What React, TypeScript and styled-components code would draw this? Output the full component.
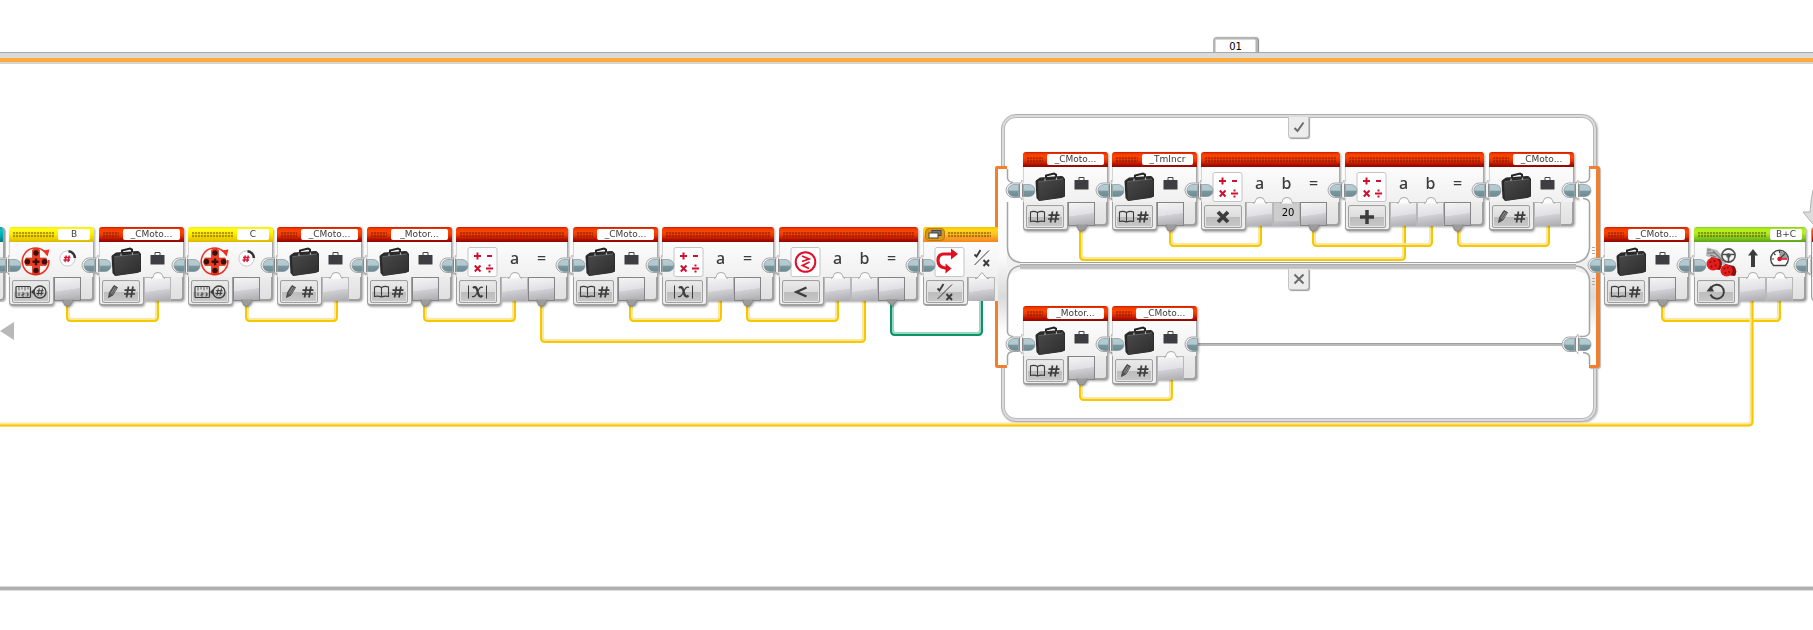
import React from "react";
import styled, { createGlobalStyle } from "styled-components";

const GlobalStyle = createGlobalStyle`
  *, *::before, *::after { box-sizing: border-box; }
  body { margin: 0; background: #fff; font-family: "DejaVu Sans", sans-serif; }
  button, input { font: inherit; color: inherit; margin: 0; padding: 0; border: 0; background: none; }
`;

type Tone = "red" | "yellow" | "green" | "teal" | "orange";
type IconName = "case" | "motor" | "math" | "compare" | "switch" | "steering";
type ModeName =
  | "read" | "write" | "measure" | "abs" | "less" | "times" | "plus" | "logic" | "rotate" | "none";
type PortLabel = "a" | "b" | "=" | "case" | "rotation" | "logic" | "up" | "power";
type PortKind = "in" | "out" | "logicIn" | "logicOut";

interface PortSpec {
  label: PortLabel;
  kind: PortKind;
  value?: string;
}

interface BlockSpec {
  x: number;
  y: number;
  tone: Tone;
  icon: IconName;
  mode: ModeName;
  name?: string;
  nameWidth?: number;
  ports: PortSpec[];
  last?: boolean;
}

const tones: Record<Tone, string> = {
  red: "linear-gradient(#c81c00 0, #f43c00 2px, #ff4600 5px, #e83000 9px, #a80c00 13px, #8c0800 15px)",
  yellow: "linear-gradient(#f4ec00 0, #fffb20 2px, #fff400 6px, #f4dc00 10px, #dcb800 15px)",
  green: "linear-gradient(#8cc820 0, #b0f020 2px, #b4f01c 6px, #8cd41c 10px, #5ca01c 15px)",
  teal: "linear-gradient(#00989c 0, #10c0c4 3px, #00a8ac 9px, #007478 15px)",
  orange: "linear-gradient(#f8c000 0, #ffd818 3px, #ffc41c 7px, #fca024 11px, #f48420 15px)",
};

const Page = styled.main`
  position: relative;
  display: flex;
  flex-direction: column;
  min-height: 100vh;
  padding: 37px 0 40px;
  overflow: hidden;
  background: #fff;
`;

const LoopHeader = styled.header`
  display: flex;
  flex-direction: column;
  padding-left: 1213px;
`;

const LoopName = styled.input`
  width: 45px;
  height: 16px;
  border: 2px solid #b4b4b4;
  border-bottom-width: 0;
  border-radius: 4px 4px 0 0;
  box-shadow: inset 0 0 0 1px #d8d8d8, 1px 0 1px #888;
  background: #fff;
  color: #000;
  font-size: 10px;
  line-height: 14px;
  text-align: center;
`;

const LoopBody = styled.section`
  flex: 1;
  min-height: 524px;
  border-top: 5px solid #dadada;
  border-bottom: 3px solid #b0b0b0;
  box-shadow: inset 0 4px 0 #ffab3a, inset 0 6px 0 #d4d4d4, inset 0 -1px 0 #d8d8d8, 0 -1px 0 #a8a8a8, 0 1px 0 #e0e0e0;
`;

const Canvas = styled.div`
  position: absolute;
  inset: 0;
`;

const WireLayer = styled.svg`
  position: absolute;
  inset: 0;
  width: 100%;
  height: 100%;
  fill: none;
`;

const BlockFrame = styled.article<{ $x: number; $y: number; $width: number; $flat?: boolean }>`
  position: absolute;
  left: ${(p) => p.$x}px;
  top: ${(p) => p.$y}px;
  width: ${(p) => p.$width}px;
  display: flex;
  flex-direction: column;
  filter: ${(p) => (p.$flat ? "none" : "drop-shadow(1px 1px 1px rgba(0, 0, 0, 0.35))")};
`;

const BlockHeader = styled.header<{ $tone: Tone }>`
  display: flex;
  align-items: center;
  gap: 4px;
  height: 15px;
  padding: 0 4px;
  border-radius: 3px 3px 0 0;
  background: ${(p) => tones[p.$tone]};
`;

const Grip = styled.span`
  flex: 1;
  height: 6px;
  background-image: radial-gradient(circle at 1px 1px, rgba(70, 20, 0, 0.4) 0, rgba(70, 20, 0, 0.4) 40%, transparent 60%);
  background-size: 3px 3px;
`;

const NameTag = styled.span<{ $width: number }>`
  width: ${(p) => p.$width}px;
  height: 11px;
  border-radius: 2px;
  background: #fff;
  color: #3c3c3c;
  font-size: 9px;
  line-height: 11px;
  text-align: center;
  white-space: nowrap;
`;

const IconRow = styled.div`
  display: flex;
  height: 35px;
  padding-top: 5px;
  border-left: 1px solid #d4d4d4;
  border-right: 1px solid #a8a8a8;
  background: linear-gradient(#fcfcfc, #f0f0f0);
`;

const MainIcon = styled.span`
  display: flex;
  width: 44px;
  padding-left: 10px;
`;

const PortName = styled.span`
  display: flex;
  justify-content: center;
  align-items: center;
  width: 27px;
  height: 22px;
  color: #3c3c3c;
  font-family: "Noto Sans", sans-serif;
  font-size: 16px;
  font-weight: 500;
  line-height: 22px;
`;

const BottomRow = styled.div`
  display: flex;
  align-items: flex-start;
`;

const ModePanel = styled.div`
  width: 45px;
  height: 29px;
  padding: 3px 3px 3px 2px;
  border: 1px solid #a0a0a0;
  border-top: 0;
  border-bottom: 2px solid #a0a0a0;
  border-radius: 0 0 4px 4px;
  background: #ededed;
`;

const ModeButton = styled.button`
  display: flex;
  align-items: center;
  justify-content: center;
  width: 38px;
  height: 23px;
  border: 1px solid #a0a0a0;
  border-radius: 2px;
  background: linear-gradient(#ececec 0, #dcdcdc 50%, #bcbcbc 51%, #c8c8c8 100%);
  box-shadow: inset 0 0 0 1px #e4e4e4;
`;

const PortSlot = styled.div<{ $out: boolean }>`
  position: relative;
  width: 27px;
  height: 24px;
  border: solid ${(p) => (p.$out ? "#848484" : "#b8b8b8")};
  border-width: ${(p) => (p.$out ? "1px" : "1px 1px 0")};
  background: linear-gradient(172deg, #f4f4f4 0, #e0e0e4 52%, #d0d0d4 54%, #acacb0 100%);
`;

const Nub = styled.svg<{ $out: boolean }>`
  position: absolute;
  left: 6px;
  top: ${(p) => (p.$out ? 21 : -7)}px;
  width: 14px;
  height: 8px;
`;

const ValueInput = styled.input`
  display: block;
  width: 25px;
  height: 18px;
  background: #cdcdcd;
  color: #000;
  font-size: 10px;
  padding-left: 3px;
  text-align: center;
`;

const Tail = styled.div`
  flex: 1;
  height: 24px;
  border-right: 2px solid #a0a0a0;
  border-bottom: 2px solid #a0a0a0;
  border-radius: 0 0 4px 0;
  background: linear-gradient(#ececec, #e0e0e0);
`;

const OpenTail = styled.div`
  flex: 1;
  height: 24px;
  background: #ececec;
`;

const PlugDrawing = styled.svg<{ $x: number; $y: number }>`
  position: absolute;
  left: ${(p) => p.$x}px;
  top: ${(p) => p.$y}px;
  width: 20px;
  height: 22px;
  overflow: visible;
`;

const SwitchFrame = styled.section`
  position: absolute;
  left: 1001px;
  top: 114px;
  width: 596px;
  height: 308px;
  border: 1px solid #b0b0b0;
  border-radius: 15px;
  box-shadow: inset 0 0 0 2px #dcdcdc, inset 0 0 0 3px #b8b8b8, 1px 1px 2px #bbb;
  background: #fff;
`;

const CaseDivider = styled.div`
  margin: 147px 16px 0;
  height: 8px;
  background: linear-gradient(#a0a0a0 1px, #f4f4f4 1px, #f4f4f4 2px, #a4a4a4 2px, #c8c8c8 4px, #b8b8b8 6px, #dedede 7px, #f0f0f0 8px);
`;

const CaseTab = styled.button<{ $y: number }>`
  position: absolute;
  left: 1288px;
  top: ${(p) => p.$y}px;
  display: flex;
  align-items: center;
  justify-content: center;
  width: 21px;
  height: 21px;
  border: 1px solid #c4c4c4;
  border-top: 0;
  border-radius: 0 0 3px 3px;
  background: #ececec;
  box-shadow: 1px 1px 1px #999;
`;

const SwitchRail = styled.div<{ $x: number; $side: "left" | "right"; $width: number }>`
  position: absolute;
  left: ${(p) => p.$x}px;
  top: 166px;
  width: ${(p) => p.$width}px;
  height: 202px;
  border: solid #f08030;
  border-width: ${(p) => (p.$side === "left" ? "3px 0 3px 3px" : "3px 4px 3px 0")};
  border-radius: ${(p) => (p.$side === "left" ? "3px 0 0 3px" : "0 3px 3px 0")};
  background: linear-gradient(#fff 0, #fafafa 45%, #dadada 65%, #fdfdfd 82%, #fff 100%);
  box-shadow: ${(p) => (p.$side === "left" ? "none" : "1px 1px 1px #bbb")};
`;

const SwitchHeader = styled.header`
  display: flex;
  align-items: center;
  gap: 3px;
  height: 15px;
  padding: 0 7px 0 2px;
  border-radius: 3px 0 2px 0;
  background: ${tones.orange};
`;

const ViewToggle = styled.button`
  display: flex;
  align-items: center;
  justify-content: center;
  width: 20px;
  height: 13px;
  border: 1px solid #b87c10;
  border-radius: 4px;
  background: #d89818;
`;

const SwitchIcons = styled(IconRow)`
  border-right: 0;
`;

const ScrollLeft = styled.button`
  position: absolute;
  left: 0;
  top: 321px;
  width: 16px;
  height: 20px;
`;

const TinyPiece = styled.div<{ $x: number }>`
  position: absolute;
  left: ${(p) => p.$x}px;
  top: 227px;
  width: 15px;
  height: 74px;
  border-right: 2px solid #a0a0a0;
  border-left: 1px solid #a0a0a0;
  border-bottom: 2px solid #a0a0a0;
  border-radius: 4px;
  background: linear-gradient(#fcfcfc, #e4e4e4);
  overflow: hidden;
  box-shadow: 1px 1px 1px #bbb;
`;

const TinyHeader = styled.div<{ $tone: Tone }>`
  height: 15px;
  background: ${(p) => tones[p.$tone]};
`;

const LoopArrow = styled.svg`
  position: absolute;
  left: 1801px;
  top: 190px;
  width: 30px;
  height: 40px;
`;

const SharedDefs = styled.svg`
  position: absolute;
  width: 0;
  height: 0;
`;

function Defs() {
  return (
    <SharedDefs aria-hidden="true">
      <defs>
        <linearGradient id="teal" x1="0" y1="0" x2="0" y2="1">
          <stop offset="0" stopColor="#b4ccd2" />
          <stop offset="0.48" stopColor="#b4c8ce" />
          <stop offset="0.54" stopColor="#7a989f" />
          <stop offset="1" stopColor="#6c8b92" />
        </linearGradient>
        <linearGradient id="leather" x1="0" y1="0" x2="1" y2="1">
          <stop offset="0" stopColor="#4a4a4a" />
          <stop offset="1" stopColor="#2c2c2c" />
        </linearGradient>
      </defs>
    </SharedDefs>
  );
}

function PlugOut({ x, y, closed }: { x: number; y: number; closed?: boolean }) {
  const outline = closed
    ? "M14.500 4H8.500A7.300 7.300 0 0 0 8.500 18.500H14.500"
    : "M18 1C18 3 17 4 15.500 4H8.500A7.300 7.300 0 0 0 8.500 18.500H15.500C17 18.500 18 19.500 18 21";
  return (
    <PlugDrawing $x={x} $y={y} viewBox="0 0 20 22">
      <path d={outline} fill="#f6f6f6" stroke="#a4a4a4" />
      <path d="M14.500 5.500H10A6 6 0 0 0 10 17.500H14.500Z" fill="url(#teal)" stroke="#76898e" strokeWidth="0.600" />
      {!closed && <path d="M15.500 4.500V18" stroke="#8a8a8a" />}
    </PlugDrawing>
  );
}

function PlugIn({ x, y }: { x: number; y: number }) {
  return (
    <PlugDrawing $x={x} $y={y} viewBox="0 0 20 22">
      <path d="M-2 3.500H1V18.500H-2Z" fill="#f4f4f4" />
      <path d="M-0.500 4.500V18" stroke="#8a8a8a" />
      <path d="M0.500 5.500H6A6 6 0 0 1 6 17.500H0.500Z" fill="url(#teal)" stroke="#76898e" strokeWidth="0.600" />
    </PlugDrawing>
  );
}

function CaseIcon() {
  return (
    <svg width="32" height="30" viewBox="0 0 32 30">
      <path d="M12 7V3.500L20 1.500L22 2.500V6" fill="none" stroke="#222" strokeWidth="2" />
      <path d="M1.500 9.500Q1.500 8.500 2.500 8L6 5.500L27 4Q29 3.900 29.500 5L31 7L31 24.500L27 26L5 29L2.500 26Z" fill="#2a2a2a" />
      <path d="M4 10L28 7.500Q30 7.400 30.200 9L30.500 23.500Q30.500 25 29 25.300L7 28.600Q5 28.800 4.900 27Z" fill="url(#leather)" />
      <path d="M4.500 9.600L29 7" stroke="#707070" strokeWidth="0.800" />
      <path d="M11 6.500V9M22.500 5.500V8" stroke="#aaa" strokeWidth="1.200" />
    </svg>
  );
}

function MotorIcon() {
  return (
    <svg width="32" height="30" viewBox="0 0 32 30">
      <path d="M24.500 4.500A13.300 13.300 0 1 0 28.800 13" fill="none" stroke="#f03020" strokeWidth="1.600" />
      <path d="M22.500 3.500L29.500 2.500L27.500 9.500Z" fill="#f03020" />
      <path d="M12.500 3Q16 0.500 19.500 3V11H26Q29 15 26 18.500H19.500V26.500Q16 29 12.500 26.500V18.500H6Q3 15 6 11H12.500Z" fill="#f03c20" stroke="#c81c08" strokeWidth="0.600" />
      <g fill="#38100c">
        <circle cx="16" cy="6" r="2.700" /><circle cx="16" cy="23.500" r="2.700" />
        <circle cx="7.500" cy="14.800" r="2.700" /><circle cx="24.500" cy="14.800" r="2.700" />
        <path d="M14.800 11.500H17.200V13.600H19.500V16H17.200V18.200H14.800V16H12.500V13.600H14.800Z" />
      </g>
    </svg>
  );
}

function Tile({ children }: { children: React.ReactNode }) {
  return (
    <svg width="31" height="30" viewBox="0 0 31 30">
      <rect x="1" y="0.500" width="29" height="29" rx="2" fill="#fff" stroke="#c4c4c4" />
      {children}
    </svg>
  );
}

function BlockIcon({ name }: { name: IconName }) {
  switch (name) {
    case "case":
      return <CaseIcon />;
    case "motor":
      return <MotorIcon />;
    case "math":
      return (
        <Tile>
          <path d="M7 9H14M10.500 5.500V12.500M20 9H25M7.800 18.500L13.500 24.500M13.500 18.500L7.800 24.500M19 21.500H26M22.500 17.500V19.500M22.500 23.500V25.500" stroke="#d01030" strokeWidth="2" />
        </Tile>
      );
    case "compare":
      return (
        <Tile>
          <circle cx="15.500" cy="15" r="9.800" fill="none" stroke="#e01028" strokeWidth="2" />
          <path d="M12 9L19 12L12 14.500M19.500 15L12.500 18.500L19 21.500" fill="none" stroke="#e01028" strokeWidth="1.800" />
        </Tile>
      );
    case "switch":
      return (
        <Tile>
          <path d="M20 7H10Q4 7 4 13.500Q4 20 11 21H13" fill="none" stroke="#e01020" strokeWidth="3.200" />
          <path d="M17 1.500L24 7L17 12.500Z M11.500 16.500L17.500 21.500L11.500 26.500Z" fill="#e01020" />
        </Tile>
      );
    case "steering":
      return (
        <svg width="32" height="32" viewBox="0 0 32 32">
          <path d="M2 0.500L12 3L21 13L20 20L11 12L1 9Z" fill="#b8b8b8" />
          <path d="M2 3H6M2 6H10M8 4L18 14M5 8L11 10" stroke="#777" strokeWidth="1.200" />
          <path d="M6 10L15 12Q19 17 15 23L6 22Z" fill="#901010" />
          <path d="M20 17L29 19Q33 23 30 29L20 28Z" fill="#901010" />
          <ellipse cx="8" cy="17" rx="6.500" ry="6.500" fill="#e41c1c" />
          <ellipse cx="21.500" cy="23.500" rx="6" ry="6" fill="#e41c1c" />
          <g fill="#801010">
            <circle cx="5.500" cy="15" r="1" /><circle cx="9.500" cy="14" r="1" /><circle cx="6.500" cy="19.500" r="1" /><circle cx="10.500" cy="18.500" r="1" />
            <circle cx="19.500" cy="21.500" r="1" /><circle cx="23" cy="20.500" r="1" /><circle cx="20.500" cy="26" r="1" /><circle cx="24" cy="25" r="1" />
          </g>
          <circle cx="23.500" cy="8.500" r="6.600" fill="#f4f4f4" stroke="#505050" strokeWidth="1.600" />
          <path d="M17 7.500H30M23.500 8V15" stroke="#505050" strokeWidth="1.600" />
          <circle cx="23.500" cy="8.500" r="2.200" fill="#505050" />
        </svg>
      );
  }
}

function LogicIcon() {
  return (
    <svg width="18" height="18" viewBox="0 0 18 18" fill="none" stroke="#3c3c3c">
      <path d="M1.500 16L16 1.500" strokeWidth="1" />
      <path d="M1.500 5.500L3.500 7.500L7.500 1" strokeWidth="1.900" />
      <path d="M10.500 11L16 17M16 11L10.500 17" strokeWidth="1.900" />
    </svg>
  );
}

function PortIcon({ label }: { label: PortLabel }) {
  switch (label) {
    case "case":
      return (
        <svg width="16" height="14" viewBox="0 0 16 14">
          <path d="M5 4V1.500H10V4" fill="none" stroke="#444" />
          <rect x="0.500" y="4" width="14" height="9.500" rx="0.500" fill="#3e3e42" />
        </svg>
      );
    case "rotation":
      return (
        <svg width="18" height="18" viewBox="0 0 18 18" fill="none">
          <circle cx="8.500" cy="9.500" r="7.600" fill="#fff" stroke="#c8c8c8" />
          <path d="M9.500 2.200A7.300 7.300 0 0 1 15.900 9" stroke="#333" strokeWidth="2.600" />
          <path d="M7.300 6.500L6 13M10.300 6.500L9 13M5 8.500H11.500M4.500 11H11" stroke="#d81838" strokeWidth="1.400" />
        </svg>
      );
    case "logic":
      return <LogicIcon />;
    case "up":
      return (
        <svg width="12" height="20" viewBox="0 0 12 20">
          <path d="M6 1L11 7.500H8V19H4V7.500H1Z" fill="#3c3c3c" />
        </svg>
      );
    case "power":
      return (
        <svg width="21" height="20" viewBox="0 0 21 20">
          <path d="M4.500 17.500A8.800 8.800 0 1 1 16.500 17.500Z" fill="#fff" stroke="#444" strokeWidth="1.400" />
          <path d="M10.500 11V3A8 8 0 0 1 18.500 11Z" fill="#9c9c9c" />
          <path d="M2.500 11H5M5 5.500L6.500 7M10.500 2.500V5M16 5.500L14.500 7M10.500 11L16 5.500" stroke="#444" strokeWidth="1.200" />
          <path d="M10.500 11H18" stroke="#e01028" strokeWidth="1.500" />
          <circle cx="10.500" cy="11" r="2.200" fill="#e01028" />
        </svg>
      );
    default:
      return <>{label}</>;
  }
}

const hash = "M4.500 0L2.500 11M9 0L7 11M0.500 3.700H11.500M0 7.500H11";

function ModeIcon({ name }: { name: ModeName }) {
  const ink = "#3c3c3c";
  switch (name) {
    case "read":
      return (
        <svg width="32" height="16" viewBox="0 0 32 16" fill="none" stroke={ink}>
          <path d="M8.500 3.500Q5 1.500 1.500 3V12.500Q5 11.500 8.500 13Q12 11.500 15.500 12.500V3Q12 1.500 8.500 3.500V13" strokeWidth="1.100" />
          <path transform="translate(19 2.500)" d={hash} strokeWidth="1.700" />
        </svg>
      );
    case "write":
      return (
        <svg width="32" height="16" viewBox="0 0 32 16" fill="none" stroke={ink}>
          <path d="M3.500 13.500L4.500 8.500L9 1.500L12.500 3.500L8 11Z" fill="#555" strokeWidth="0.800" />
          <path d="M6 9.500L10 3M7.500 10.500L11.500 4" stroke="#bbb" strokeWidth="0.600" />
          <path transform="translate(19 2.500)" d={hash} strokeWidth="1.700" />
        </svg>
      );
    case "measure":
      return (
        <svg width="32" height="16" viewBox="0 0 32 16" fill="none" stroke={ink}>
          <rect x="1" y="2.500" width="14.500" height="11" rx="1" strokeWidth="1.200" />
          <path d="M4 3V6.500M7 3V5.500M10 3V6.500M13 3V5.500M4 8.500V12M7 9H9V10.500H7V12H9M11.500 9H13V12H11.500M12 10.500H13" strokeWidth="0.800" />
          <path d="M19.500 4.500L16 8L19.500 11Z" fill={ink} stroke="none" />
          <circle cx="25" cy="8" r="6" strokeWidth="1.300" />
          <path d="M24.300 4.500L23 11.500M27.500 4.500L26 11.500M21.800 6.700H28.700M21.300 9.500H28.200" strokeWidth="1.100" />
        </svg>
      );
    case "abs":
      return (
        <svg width="22" height="16" viewBox="0 0 22 16" fill="none" stroke={ink}>
          <path d="M1.500 1.500V14.500M19.500 1.500V14.500" strokeWidth="1" />
          <path d="M6 4Q8.500 1.500 10 5.500L11.500 10.500Q13 14 15.500 11.500" strokeWidth="2.200" />
          <path d="M16 3.500Q13.500 2 11.500 6L9.500 10Q7.500 13.500 5 12.500" strokeWidth="1.200" />
        </svg>
      );
    case "less":
      return (
        <svg width="14" height="14" viewBox="0 0 14 14" fill="none" stroke={ink}>
          <path d="M12.500 2.500L2.500 7L12.500 11.500" strokeWidth="2.400" />
        </svg>
      );
    case "times":
      return (
        <svg width="14" height="14" viewBox="0 0 14 14" fill="none" stroke={ink}>
          <path d="M2 2L12 12M12 2L2 12" strokeWidth="3.800" />
        </svg>
      );
    case "plus":
      return (
        <svg width="16" height="16" viewBox="0 0 16 16" fill="none" stroke={ink}>
          <path d="M8 1V15M1 8H15" strokeWidth="3.500" />
        </svg>
      );
    case "logic":
      return <LogicIcon />;
    case "rotate":
      return (
        <svg width="20" height="18" viewBox="0 0 20 18" fill="none" stroke={ink}>
          <path d="M5 5A7 7 0 1 1 4.500 11.500" strokeWidth="1.900" />
          <path d="M0.500 8.500L5 2.500L8 8.500Z" fill={ink} stroke="none" />
        </svg>
      );
    default:
      return null;
  }
}

function Port({ kind, value }: PortSpec) {
  const out = kind === "out" || kind === "logicOut";
  const shapes: Record<PortKind, string> = {
    in: "M0 7.500Q2.500 7 2.500 4.500Q3 1.500 7 1.500Q11 1.500 11.500 4.500Q11.500 7 14 7.500",
    logicIn: "M0 7.500H2L7 1.500L12 7.500H14",
    out: "M2 0.500V3Q3 4 3.500 6Q5 7.500 8 6.800Q10 6.500 10.300 4Q11.500 3 12 2.500V0.500",
    logicOut: "M1.500 1H12.500L7 7Z",
  };
  return (
    <PortSlot $out={out}>
      {value !== undefined && <ValueInput aria-label="Input b" defaultValue={value} />}
      <Nub $out={out} viewBox="0 0 14 8">
        <path d={shapes[kind]} fill={out ? "#9c9c9c" : "#fcfcfc"} stroke={out ? "#868686" : "#a8a8a8"} strokeWidth="1" />
      </Nub>
    </PortSlot>
  );
}

const blockWidth: Record<number, number> = { 1: 85, 2: 112, 3: 139 };

function Block({ x, y, tone, icon, mode, name, nameWidth = 57, ports, last }: BlockSpec) {
  const width = blockWidth[ports.length];
  return (
    <BlockFrame $x={x} $y={y} $width={width}>
      <BlockHeader $tone={tone}>
        <Grip />
        {name && <NameTag $width={nameWidth}>{name}</NameTag>}
      </BlockHeader>
      <IconRow>
        <MainIcon><BlockIcon name={icon} /></MainIcon>
        {ports.map((p, i) => (
          <PortName key={i}><PortIcon label={p.label} /></PortName>
        ))}
      </IconRow>
      <BottomRow>
        <ModePanel>
          <ModeButton type="button" aria-label={`Mode: ${mode}`}><ModeIcon name={mode} /></ModeButton>
        </ModePanel>
        {ports.map((p, i) => <Port key={i} {...p} />)}
        <Tail />
      </BottomRow>
      <PlugIn x={0} y={27} />
      <PlugOut x={width - 14} y={27} closed={last} />
    </BlockFrame>
  );
}

function SwitchBlock() {
  return (
    <BlockFrame $x={923} $y={227} $width={75} $flat>
      <SwitchHeader>
        <ViewToggle type="button" aria-label="Toggle view">
          <svg width="14" height="9" viewBox="0 0 14 9">
            <rect x="4" y="0.500" width="9" height="5" fill="#777" stroke="#444" />
            <rect x="1" y="3" width="9" height="5" fill="#fff" stroke="#444" />
          </svg>
        </ViewToggle>
        <Grip />
      </SwitchHeader>
      <SwitchIcons>
        <MainIcon><BlockIcon name="switch" /></MainIcon>
        <PortName><PortIcon label="logic" /></PortName>
      </SwitchIcons>
      <BottomRow>
        <ModePanel>
          <ModeButton type="button" aria-label="Mode: logic"><ModeIcon name="logic" /></ModeButton>
        </ModePanel>
        <Port kind="logicIn" label="logic" />
        <OpenTail />
      </BottomRow>
      <PlugIn x={0} y={27} />
    </BlockFrame>
  );
}

interface WireSpec {
  x1: number;
  x2: number;
  top: number;
  bottom: number;
  green?: boolean;
}

function Wire({ x1, x2, top, bottom, green }: WireSpec) {
  const path = (o: number) =>
    `M${x1 - o} ${top}V${bottom - 4 + o}Q${x1 - o} ${bottom + o} ${x1 + 4 - o} ${bottom + o}H${x2 - 4 + o}Q${x2 + o} ${bottom + o} ${x2 + o} ${bottom - 4 + o}V${top}`;
  return (
    <g>
      <path d={path(0)} stroke={green ? "#9cd8c0" : "#fbe89c"} strokeWidth="4" />
      <path d={path(1)} stroke={green ? "#0c9468" : "#f6c800"} strokeWidth="2" />
    </g>
  );
}

const wires: WireSpec[] = [
  { x1: 68, x2: 157, top: 298, bottom: 320 },
  { x1: 247, x2: 336, top: 298, bottom: 320 },
  { x1: 425, x2: 514, top: 298, bottom: 320 },
  { x1: 542, x2: 864, top: 298, bottom: 341 },
  { x1: 631, x2: 720, top: 298, bottom: 320 },
  { x1: 748, x2: 837, top: 298, bottom: 320 },
  { x1: 892, x2: 981, top: 298, bottom: 334, green: true },
  { x1: 1081, x2: 1404, top: 223, bottom: 259 },
  { x1: 1171, x2: 1260, top: 223, bottom: 245 },
  { x1: 1314, x2: 1431, top: 223, bottom: 245 },
  { x1: 1459, x2: 1548, top: 223, bottom: 245 },
  { x1: 1081, x2: 1171, top: 377, bottom: 399 },
  { x1: 1663, x2: 1779, top: 298, bottom: 320 },
];

const rotationOut: PortSpec[] = [{ label: "rotation", kind: "out" }];
const caseIn: PortSpec[] = [{ label: "case", kind: "in" }];
const caseOut: PortSpec[] = [{ label: "case", kind: "out" }];
const unary: PortSpec[] = [{ label: "a", kind: "in" }, { label: "=", kind: "out" }];
const binary = (out: PortKind, b?: string): PortSpec[] => [
  { label: "a", kind: "in" },
  { label: "b", kind: "in", value: b },
  { label: "=", kind: out },
];

const blocks: BlockSpec[] = [
  { x: 9, y: 227, tone: "yellow", icon: "motor", mode: "measure", name: "B", nameWidth: 32, ports: rotationOut },
  { x: 99, y: 227, tone: "red", icon: "case", mode: "write", name: "_CMoto...", ports: caseIn },
  { x: 188, y: 227, tone: "yellow", icon: "motor", mode: "measure", name: "C", nameWidth: 32, ports: rotationOut },
  { x: 277, y: 227, tone: "red", icon: "case", mode: "write", name: "_CMoto...", ports: caseIn },
  { x: 367, y: 227, tone: "red", icon: "case", mode: "read", name: "_Motor...", ports: caseOut },
  { x: 456, y: 227, tone: "red", icon: "math", mode: "abs", ports: unary },
  { x: 573, y: 227, tone: "red", icon: "case", mode: "read", name: "_CMoto...", ports: caseOut },
  { x: 662, y: 227, tone: "red", icon: "math", mode: "abs", ports: unary },
  { x: 779, y: 227, tone: "red", icon: "compare", mode: "less", ports: binary("logicOut") },
  { x: 1023, y: 152, tone: "red", icon: "case", mode: "read", name: "_CMoto...", ports: caseOut },
  { x: 1112, y: 152, tone: "red", icon: "case", mode: "read", name: "_TmIncr", nameWidth: 51, ports: caseOut },
  { x: 1201, y: 152, tone: "red", icon: "math", mode: "times", ports: binary("out", "20") },
  { x: 1345, y: 152, tone: "red", icon: "math", mode: "plus", ports: binary("out") },
  { x: 1489, y: 152, tone: "red", icon: "case", mode: "write", name: "_CMoto...", ports: caseIn },
  { x: 1023, y: 306, tone: "red", icon: "case", mode: "read", name: "_Motor...", ports: caseOut },
  { x: 1112, y: 306, tone: "red", icon: "case", mode: "write", name: "_CMoto...", ports: caseIn, last: true },
  { x: 1604, y: 227, tone: "red", icon: "case", mode: "read", name: "_CMoto...", ports: caseOut },
  {
    x: 1694, y: 227, tone: "green", icon: "steering", mode: "rotate", name: "B+C", nameWidth: 32,
    ports: [{ label: "up", kind: "in" }, { label: "power", kind: "in" }],
  },
];

export default function App() {
  return (
    <Page>
      <GlobalStyle />
      <Defs />
      <LoopHeader>
        <LoopName aria-label="Loop name" defaultValue="01" />
      </LoopHeader>
      <LoopBody />
      <Canvas>
        <SwitchFrame>
          <CaseDivider />
        </SwitchFrame>
        <CaseTab $y={117} type="button" aria-label="True case">
          <svg width="12" height="12" viewBox="0 0 12 12"><path d="M1.500 7L4.500 10L10.500 1.500" fill="none" stroke="#6c6c6c" strokeWidth="2" /></svg>
        </CaseTab>
        <CaseTab $y={269} type="button" aria-label="False case">
          <svg width="12" height="12" viewBox="0 0 12 12"><path d="M1.500 1.500L10.500 10.500M10.500 1.500L1.500 10.500" fill="none" stroke="#6c6c6c" strokeWidth="2" /></svg>
        </CaseTab>
        <SwitchRail $x={995} $side="left" $width={12} />
        <SwitchRail $x={1589} $side="right" $width={11} />
        <WireLayer>
          <path d="M1007 250L1010 256L1020 262V270L1010 274L1007 280Z" fill="#f0f0f0" />
          <path d="M1589 250L1586 256L1576 262V270L1586 274L1589 280Z" fill="#f0f0f0" />
          <path d="M1007.500 169V178Q1008 182 1013 182.500M1007.500 202V248Q1008 261 1020 262.500M1020 266Q1009 267 1007.500 280V332Q1008 336 1013 336.500M1013 351.500Q1008 352 1007.500 356V365" stroke="#a4a4a4" strokeWidth="1.500" />
          <path d="M1589.500 169V178Q1589 182 1583 182.500H1576M1583 198.500Q1589 199 1589.500 203V248Q1588 261 1576 262.500M1576 266Q1588 267 1589.500 280V332Q1589 336 1583 336.500H1576M1583 352.500Q1589 353 1589.500 357V365" stroke="#a4a4a4" strokeWidth="1.500" />
          <path d="M1593.500 247V256M1593.500 278V287" stroke="#aaa" strokeWidth="3" strokeDasharray="1 2" />
          <path d="M1198 344.500H1562" stroke="#b8b8b8" strokeWidth="3" />
          <path d="M1198 343.500H1562" stroke="#a0a0a0" />
          {wires.map((w, i) => <Wire key={i} {...w} />)}
          <path d="M0 424.500H1747.500Q1751.500 424.500 1751.500 420.500V298" stroke="#fbe89c" strokeWidth="4" />
          <path d="M0 425.500H1748.500Q1752.500 425.500 1752.500 421.500V298" stroke="#f6c800" strokeWidth="2" />
        </WireLayer>
        <TinyPiece $x={-10}><TinyHeader $tone="teal" /></TinyPiece>
        <PlugOut x={-9} y={254} />
        <TinyPiece $x={1811}><TinyHeader $tone="red" /></TinyPiece>
        {blocks.map((b) => <Block key={`${b.x}-${b.y}`} {...b} />)}
        <SwitchBlock />
        <PlugOut x={1004} y={179} />
        <PlugOut x={1004} y={333} />
        <PlugOut x={1560} y={333} />
        <PlugOut x={1586} y={254} />
        <PlugIn x={1579} y={179} />
        <PlugIn x={1579} y={333} />
        <ScrollLeft type="button" aria-label="Scroll left">
          <svg width="16" height="20" viewBox="0 0 16 20"><path d="M0 10L14 1V19Z" fill="#b8b8b8" /></svg>
        </ScrollLeft>
        <LoopArrow viewBox="0 0 30 40">
          <path d="M12 0Q10 8 9 22H2L16 39L30 22H22V0Z" fill="#dcdcdc" stroke="#b0b0b0" />
        </LoopArrow>
      </Canvas>
    </Page>
  );
}
